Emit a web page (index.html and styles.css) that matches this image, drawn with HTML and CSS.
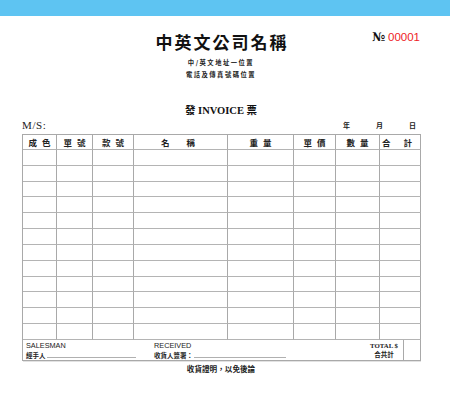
FILE: index.html
```html
<!DOCTYPE html>
<html lang="zh-Hant">
<head>
<meta charset="utf-8">
<title>Invoice</title>
<link rel="stylesheet" href="styles.css">
</head>
<body>
<div class="topbar"></div>
<div class="sheet">
  <header class="head">
    <div class="head-side"></div>
    <h1 class="company">中英文公司名稱</h1>
    <div class="serial"><span class="no">№</span><span class="num">00001</span></div>
  </header>
  <p class="addr">中/英文地址一位置</p>
  <p class="addr">電話及傳真號碼位置</p>
  <h2 class="doc-title"><span class="cjk">發</span> INVOICE <span class="cjk">票</span></h2>
  <div class="meta">
    <span class="ms">M/S:</span>
    <div class="date"><span>年</span><span>月</span><span>日</span></div>
  </div>
  <div class="grid">
    <div class="th"><span>成</span><span>色</span></div>
    <div class="th"><span>單</span><span>號</span></div>
    <div class="th"><span>款</span><span>號</span></div>
    <div class="th wide"><span>名</span><span>稱</span></div>
    <div class="th"><span>重</span><span>量</span></div>
    <div class="th"><span>單</span><span>價</span></div>
    <div class="th"><span>數</span><span>量</span></div>
    <div class="th mid"><span>合</span><span>計</span></div>

    <div class="td"></div><div class="td"></div><div class="td"></div><div class="td"></div><div class="td"></div><div class="td"></div><div class="td"></div><div class="td"></div>
    <div class="td"></div><div class="td"></div><div class="td"></div><div class="td"></div><div class="td"></div><div class="td"></div><div class="td"></div><div class="td"></div>
    <div class="td"></div><div class="td"></div><div class="td"></div><div class="td"></div><div class="td"></div><div class="td"></div><div class="td"></div><div class="td"></div>
    <div class="td"></div><div class="td"></div><div class="td"></div><div class="td"></div><div class="td"></div><div class="td"></div><div class="td"></div><div class="td"></div>
    <div class="td"></div><div class="td"></div><div class="td"></div><div class="td"></div><div class="td"></div><div class="td"></div><div class="td"></div><div class="td"></div>
    <div class="td"></div><div class="td"></div><div class="td"></div><div class="td"></div><div class="td"></div><div class="td"></div><div class="td"></div><div class="td"></div>
    <div class="td"></div><div class="td"></div><div class="td"></div><div class="td"></div><div class="td"></div><div class="td"></div><div class="td"></div><div class="td"></div>
    <div class="td"></div><div class="td"></div><div class="td"></div><div class="td"></div><div class="td"></div><div class="td"></div><div class="td"></div><div class="td"></div>
    <div class="td"></div><div class="td"></div><div class="td"></div><div class="td"></div><div class="td"></div><div class="td"></div><div class="td"></div><div class="td"></div>
    <div class="td"></div><div class="td"></div><div class="td"></div><div class="td"></div><div class="td"></div><div class="td"></div><div class="td"></div><div class="td"></div>
    <div class="td"></div><div class="td"></div><div class="td"></div><div class="td"></div><div class="td"></div><div class="td"></div><div class="td"></div><div class="td"></div>
    <div class="td"></div><div class="td"></div><div class="td"></div><div class="td"></div><div class="td"></div><div class="td"></div><div class="td"></div><div class="td"></div>

    <div class="foot">
      <div class="foot-main">
        <div class="sign sales">
          <div class="en">SALESMAN</div>
          <div class="sign-line"><span class="zh">經手人</span><span class="blank b1"></span></div>
        </div>
        <div class="sign recv">
          <div class="en">RECEIVED</div>
          <div class="sign-line"><span class="zh">收貨人簽署：</span><span class="blank b2"></span></div>
        </div>
        <div class="total">
          <div class="total-en">TOTAL $</div>
          <div class="zh">合共計</div>
        </div>
      </div>
      <div class="foot-end"></div>
    </div>
  </div>
  <p class="note">收貨證明，以免後論</p>
</div>
</body>
</html>
```
FILE: styles.css
```css
html, body {
  margin: 0;
  padding: 0;
  background: #ffffff;
}

body {
  font-family: "Noto Sans CJK TC", "Noto Sans CJK SC", sans-serif;
  color: #111;
}

.topbar {
  height: 16px;
  background: #5ec4f2;
}

.sheet {
  padding: 0 30px 0 22px;
}

.head {
  display: grid;
  grid-template-columns: 1fr auto 1fr;
  align-items: start;
  padding-top: 11px;
}

.company {
  margin: 5px -2px 0 0;
  font-size: 17px;
  line-height: 20px;
  font-weight: 700;
  letter-spacing: 2px;
  color: #111;
}

.serial {
  justify-self: end;
  line-height: 14px;
  white-space: nowrap;
}

.serial .no {
  font-family: "DejaVu Serif", "Liberation Serif", serif;
  font-weight: 700;
  font-size: 12px;
  color: #111;
  margin-right: 3px;
}

.serial .num {
  font-family: "Liberation Sans", Arial, sans-serif;
  font-size: 11.5px;
  color: #ee1c25;
}

.addr {
  margin: 0;
  text-align: center;
  font-size: 6.3px;
  line-height: 12px;
  font-weight: 700;
  letter-spacing: 1.5px;
  color: #222;
}

.addr:first-of-type {
  margin-top: 5px;
}

.doc-title {
  margin: 22px 0 0;
  text-align: center;
  font-family: "Liberation Serif", "Times New Roman", serif;
  font-size: 10.5px;
  line-height: 14px;
  font-weight: 700;
  color: #111;
}

.doc-title .cjk {
  font-family: "Noto Sans CJK TC", "Noto Sans CJK SC", sans-serif;
}

.meta {
  display: flex;
  justify-content: space-between;
  align-items: flex-start;
  height: 16px;
}

.ms {
  font-family: "Liberation Serif", "Times New Roman", serif;
  font-size: 11px;
  line-height: 14px;
  letter-spacing: 0.6px;
  color: #222;
}

.date {
  display: flex;
  gap: 26px;
  padding-right: 4px;
  font-size: 7px;
  line-height: 14px;
  font-weight: 700;
  color: #222;
}

.grid {
  display: grid;
  grid-template-columns: 34px 36px 41px 94px 66px 42px 44px 41px;
  grid-template-rows: 15px repeat(12, 15.83px) 21px;
  border-left: 1px solid #a9a9a9;
  border-top: 1px solid #a9a9a9;
  width: 398px;
}

.th, .td {
  box-sizing: border-box;
  border-right: 1px solid #a9a9a9;
  border-bottom: 1px solid #b4b4b4;
}

.th {
  display: flex;
  justify-content: center;
  align-items: center;
  gap: 5px;
  font-size: 8.5px;
  font-weight: 700;
  color: #222;
  line-height: 1;
}

.th.wide {
  gap: 17px;
  padding-right: 5px;
}

.th.mid {
  gap: 13px;
  padding-right: 6px;
}

.foot {
  grid-column: 1 / -1;
  display: flex;
  box-sizing: border-box;
  border-right: 1px solid #a9a9a9;
  border-bottom: 1px solid #a9a9a9;
  box-shadow: 0 1px 0 #e2e2e2;
}

.foot-main {
  flex: 0 0 381px;
  box-sizing: border-box;
  border-right: 1px solid #a9a9a9;
  display: flex;
  align-items: flex-start;
  padding: 2.5px 5px 0 3px;
}

.foot-end {
  flex: 1;
}

.sign {
  display: flex;
  flex-direction: column;
}

.sales {
  width: 128px;
}

.en {
  font-family: "Liberation Sans", Arial, sans-serif;
  font-size: 7.3px;
  line-height: 8px;
  color: #222;
}

.sign-line {
  display: flex;
  align-items: flex-end;
  height: 9px;
}

.zh {
  font-size: 6.5px;
  line-height: 8px;
  font-weight: 700;
  color: #222;
}

.blank {
  display: block;
  height: 0;
  border-bottom: 1px solid #b0b0b0;
  margin-left: 1px;
  margin-bottom: 1px;
}

.b1 {
  width: 89px;
}

.b2 {
  width: 92px;
}

.total {
  margin-left: auto;
  text-align: center;
}

.total-en {
  font-family: "Liberation Serif", "Times New Roman", serif;
  font-size: 6.8px;
  line-height: 8px;
  font-weight: 700;
  color: #222;
}

.total .zh {
  line-height: 9px;
}

.note {
  margin: 2px 0 0;
  text-align: center;
  font-size: 7.6px;
  line-height: 12px;
  font-weight: 700;
  color: #222;
}
```
